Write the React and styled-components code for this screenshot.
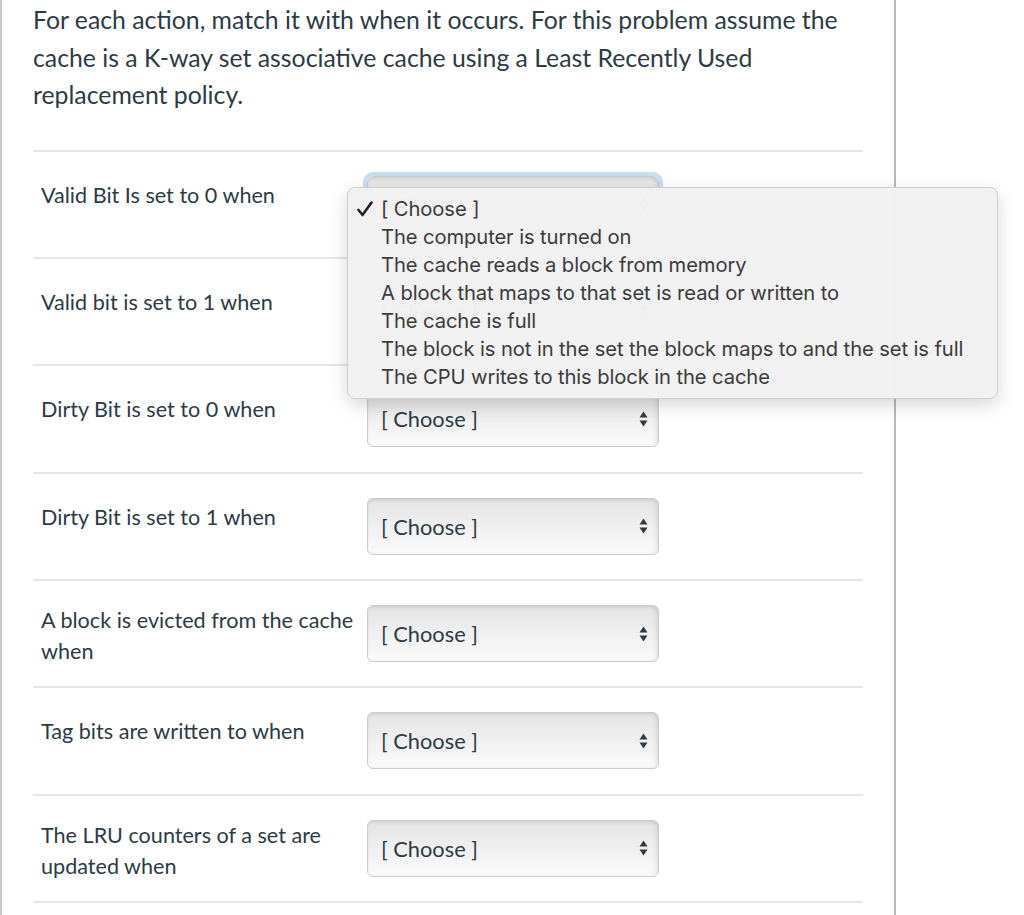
import React from 'react';
import styled, { createGlobalStyle } from 'styled-components';

const Global = createGlobalStyle`
  html, body {
    margin: 0;
    padding: 0;
    background: #fff;
  }
  body {
    font-family: Lato, "Liberation Sans", sans-serif;
    color: #2d3b45;
    overflow: hidden;
  }
`;

const rows = [
  'Valid Bit Is set to 0 when',
  'Valid bit is set to 1 when',
  'Dirty Bit is set to 0 when',
  'Dirty Bit is set to 1 when',
  'A block is evicted from the cache when',
  'Tag bits are written to when',
  'The LRU counters of a set are updated when',
];

const options = [
  '[ Choose ]',
  'The computer is turned on',
  'The cache reads a block from memory',
  'A block that maps to that set is read or written to',
  'The cache is full',
  'The block is not in the set the block maps to and the set is full',
  'The CPU writes to this block in the cache',
];

const Page = styled.div`
  box-sizing: border-box;
  width: 896px;
  min-height: 915px;
  border-left: 2px solid #c9c9c9;
  border-right: 2px solid #b9b9b9;
  padding: 0 31px;
`;

const Intro = styled.p`
  margin: 0;
  padding-top: 1px;
  font-size: 24.8px;
  line-height: 37.5px;
  width: 830px;
`;

const List = styled.div`
  margin-top: 36px;
  border-top: 2px solid #e4e6e8;
`;

const Row = styled.div`
  display: flex;
  align-items: flex-start;
  padding: 24px 0 24.4px 8px;
  border-bottom: 2px solid #e4e6e8;
`;

const Label = styled.div`
  box-sizing: border-box;
  width: 326px;
  height: 57px;
  padding-top: ${p => (p.$two ? 0 : 4)}px;
  font-size: 21.6px;
  line-height: 31px;
`;

const SelectWrap = styled.div`
  position: relative;
  width: 292px;
  height: 57px;
`;

const Select = styled.div`
  box-sizing: border-box;
  width: 100%;
  height: 100%;
  display: flex;
  align-items: center;
  justify-content: space-between;
  padding: 0 10px 0 13px;
  border: 1px solid #c7cdd1;
  border-radius: 6px;
  background: linear-gradient(#e4e4e4, #fbfbfb);
  box-shadow: inset 0 2px 3px rgba(0, 0, 0, 0.06), inset -3px 0 4px rgba(0, 0, 0, 0.06);
  font-size: 21.8px;
  outline: ${p => (p.$focus ? '4px solid #c9dcf5' : 'none')};
`;

const Arrows = styled.svg`
  width: 9px;
  height: 16px;
  flex: none;
`;

const Menu = styled.div`
  position: absolute;
  left: -20px;
  top: 11px;
  z-index: 5;
  width: 651px;
  box-sizing: border-box;
  padding: 7px 0;
  background: rgba(241, 241, 241, 0.99);
  border: 1px solid #cfcfcf;
  border-radius: 8px;
  box-shadow: 0 6px 18px rgba(0, 0, 0, 0.16);
  font-family: Inter, "Noto Sans", sans-serif;
  font-size: 20.2px;
  color: #3b3b3b;
`;

const Item = styled.div`
  display: flex;
  align-items: center;
  height: 28px;
  padding-left: 33px;
  position: relative;
  white-space: nowrap;
  letter-spacing: -0.1px;
`;

const Check = styled.svg`
  position: absolute;
  left: 9px;
  top: 6px;
  width: 16px;
  height: 16px;
`;

const UpDown = () => (
  <Arrows viewBox="0 0 9 16">
    <path d="M4.5 0.5 L8.5 6.5 L0.5 6.5 Z" fill="#2d3b45" />
    <path d="M4.5 15.5 L8.5 9.5 L0.5 9.5 Z" fill="#2d3b45" />
  </Arrows>
);

const Tick = () => (
  <Check viewBox="0 0 16 16">
    <path d="M1.5 9 L5.5 14 L14.5 1.5" fill="none" stroke="#222" strokeWidth="2.6" strokeLinecap="round" strokeLinejoin="round" />
  </Check>
);

export default function App() {
  return (
    <>
      <Global />
      <Page>
        <Intro>
          For each action, match it with when it occurs. For this problem assume the
          cache is a K-way set associative cache using a Least Recently Used
          replacement policy.
        </Intro>
        <List>
          {rows.map((label, i) => (
            <Row key={label}>
              <Label $two={label.length > 30}>{label}</Label>
              <SelectWrap>
                <Select $focus={i === 0}>
                  <span>[ Choose ]</span>
                  <UpDown />
                </Select>
                {i === 0 && (
                  <Menu>
                    {options.map((o, j) => (
                      <Item key={o}>
                        {j === 0 && <Tick />}
                        {o}
                      </Item>
                    ))}
                  </Menu>
                )}
              </SelectWrap>
            </Row>
          ))}
        </List>
      </Page>
    </>
  );
}
